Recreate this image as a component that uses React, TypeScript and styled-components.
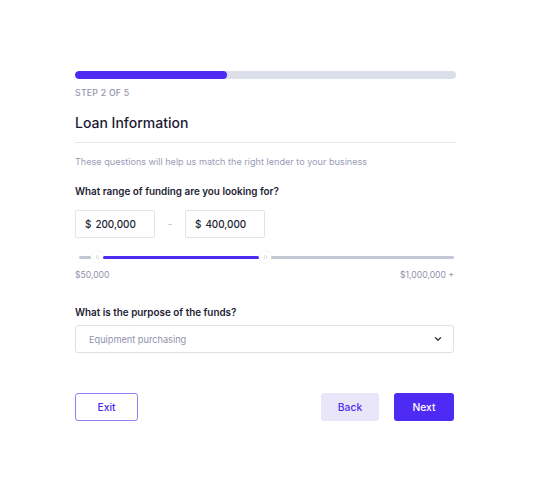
import React from "react";
import styled, {createGlobalStyle} from "styled-components";

const GlobalStyle = createGlobalStyle`
	html, body {
		margin: 0;
		padding: 0;
		background: #ffffff;
		font-family: Inter, "Liberation Sans", sans-serif;
	}
`;

const Page = styled.div`
	width: 550px;
	height: 500px;
	box-sizing: border-box;
	padding: 71px 0 0 75px;
`;

const Form = styled.div`
	width: 381px;
	display: flex;
	flex-direction: column;
`;

const Progress = styled.div`
	height: 8px;
	border-radius: 4px;
	background: #dadfea;
	overflow: hidden;
`;

const ProgressFill = styled.div`
	height: 100%;
	border-radius: 4px;
	background: #4e2bf4;
`;

const Step = styled.div`
	margin-top: 8px;
	line-height: 12px;
	font-size: 8.8px;
	font-weight: 500;
	letter-spacing: 0.2px;
	color: #9496ad;
`;

const Title = styled.h1`
	margin: 14px 0 0;
	line-height: 20px;
	font-size: 14px;
	font-weight: 500;
	color: #1b1a33;
	padding-bottom: 9px;
	border-bottom: 1px solid #e6e7ea;
`;

const Hint = styled.p`
	margin: 13px 0 0;
	line-height: 12px;
	font-size: 9.1px;
	color: #9a9cba;
`;

const Question = styled.div<{gap?: number}>`
	margin-top: ${p => p.gap ?? 16}px;
	line-height: 14px;
	font-size: 9.9px;
	font-weight: 600;
	color: #1e1d34;
`;

const RangeRow = styled.div`
	margin-top: 12px;
	display: flex;
	align-items: center;
`;

const Amount = styled.div`
	width: 80px;
	height: 28px;
	box-sizing: border-box;
	border: 1px solid #e3e4e8;
	border-radius: 2px;
	padding-left: 9px;
	display: flex;
	align-items: center;
	gap: 4px;
	font-size: 9.9px;
	font-weight: 500;
	color: #1e1d34;
`;

const Dash = styled.span`
	width: 30px;
	text-align: center;
	font-size: 10px;
	color: #b6b8c6;
`;

const Slider = styled.div`
	margin-top: 13px;
	height: 12px;
	display: flex;
	align-items: center;
	padding: 0 2px 0 4px;
`;

const Track = styled.div<{active?: boolean; grow?: number}>`
	height: 3px;
	border-radius: 2px;
	flex: ${p => p.grow ?? 1} 1 0;
	background: ${p => (p.active ? "#4e2bf4" : "#c2c8d1")};
`;

const Handle = styled.div`
	width: 12px;
	height: 12px;
	border-radius: 50%;
	background: #ffffff;
	box-shadow: 0 0 2px rgba(40, 40, 80, 0.12);
	display: flex;
	align-items: center;
	justify-content: center;
	gap: 1px;
	flex: none;
	&::before,
	&::after {
		content: "";
		width: 1px;
		height: 4px;
		background: #dcdfe6;
	}
`;

const Scale = styled.div`
	margin-top: 6px;
	line-height: 12px;
	display: flex;
	justify-content: space-between;
	padding-right: 2px;
	font-size: 8.6px;
	color: #8f92ad;
`;

const Select = styled.div`
	margin-top: 6px;
	height: 28px;
	width: 379px;
	box-sizing: border-box;
	border: 1px solid #dfe0e5;
	border-radius: 3px;
	padding: 0 10px 0 13px;
	display: flex;
	align-items: center;
	justify-content: space-between;
	font-size: 9.2px;
	color: #8f92ad;
`;

const Actions = styled.div`
	margin-top: 40px;
	width: 379px;
	display: flex;
	align-items: center;
`;

const Button = styled.button<{variant: "outline" | "soft" | "solid"}>`
	height: 28px;
	box-sizing: border-box;
	border-radius: 3px;
	font-family: inherit;
	font-size: 10.3px;
	font-weight: 500;
	cursor: pointer;
	padding: 0;
	border: 1px solid
		${p => (p.variant === "outline" ? "#8f7ff7" : "transparent")};
	background: ${p =>
		p.variant === "solid" ? "#4e2bf4" : p.variant === "soft" ? "#e8e6f8" : "#ffffff"};
	color: ${p => (p.variant === "solid" ? "#ffffff" : "#4e2bf4")};
`;

const ExitButton = styled(Button)`
	width: 63px;
	margin-right: auto;
`;

const BackButton = styled(Button)`
	width: 58px;
	margin-right: 15px;
`;

const NextButton = styled(Button)`
	width: 60px;
`;

const Chevron = () => (
	<svg width="10" height="10" viewBox="0 0 10 10">
		<path d="M2.5 3.8 L5 6.2 L7.5 3.8" fill="none" stroke="#3a3a4a" strokeWidth="1.4" strokeLinecap="round" strokeLinejoin="round" />
	</svg>
);

export default function App() {
	const step = 2;
	const steps = 5;
	return (
		<>
			<GlobalStyle />
			<Page>
				<Form>
					<Progress>
						<ProgressFill style={{width: `${(step / steps) * 100}%`}} />
					</Progress>
					<Step>STEP {step} OF {steps}</Step>
					<Title>Loan Information</Title>
					<Hint>These questions will help us match the right lender to your business</Hint>
					<Question>What range of funding are you looking for?</Question>
					<RangeRow>
						<Amount>
							<span>$</span>
							<span>200,000</span>
						</Amount>
						<Dash>-</Dash>
						<Amount>
							<span>$</span>
							<span>400,000</span>
						</Amount>
					</RangeRow>
					<Slider>
						<Track grow={12} />
						<Handle />
						<Track active grow={156} />
						<Handle />
						<Track grow={182} />
					</Slider>
					<Scale>
						<span>$50,000</span>
						<span>$1,000,000 +</span>
					</Scale>
					<Question gap={24}>What is the purpose of the funds?</Question>
					<Select>
						<span>Equipment purchasing</span>
						<Chevron />
					</Select>
					<Actions>
						<ExitButton variant="outline">Exit</ExitButton>
						<BackButton variant="soft">Back</BackButton>
						<NextButton variant="solid">Next</NextButton>
					</Actions>
				</Form>
			</Page>
		</>
	);
}
